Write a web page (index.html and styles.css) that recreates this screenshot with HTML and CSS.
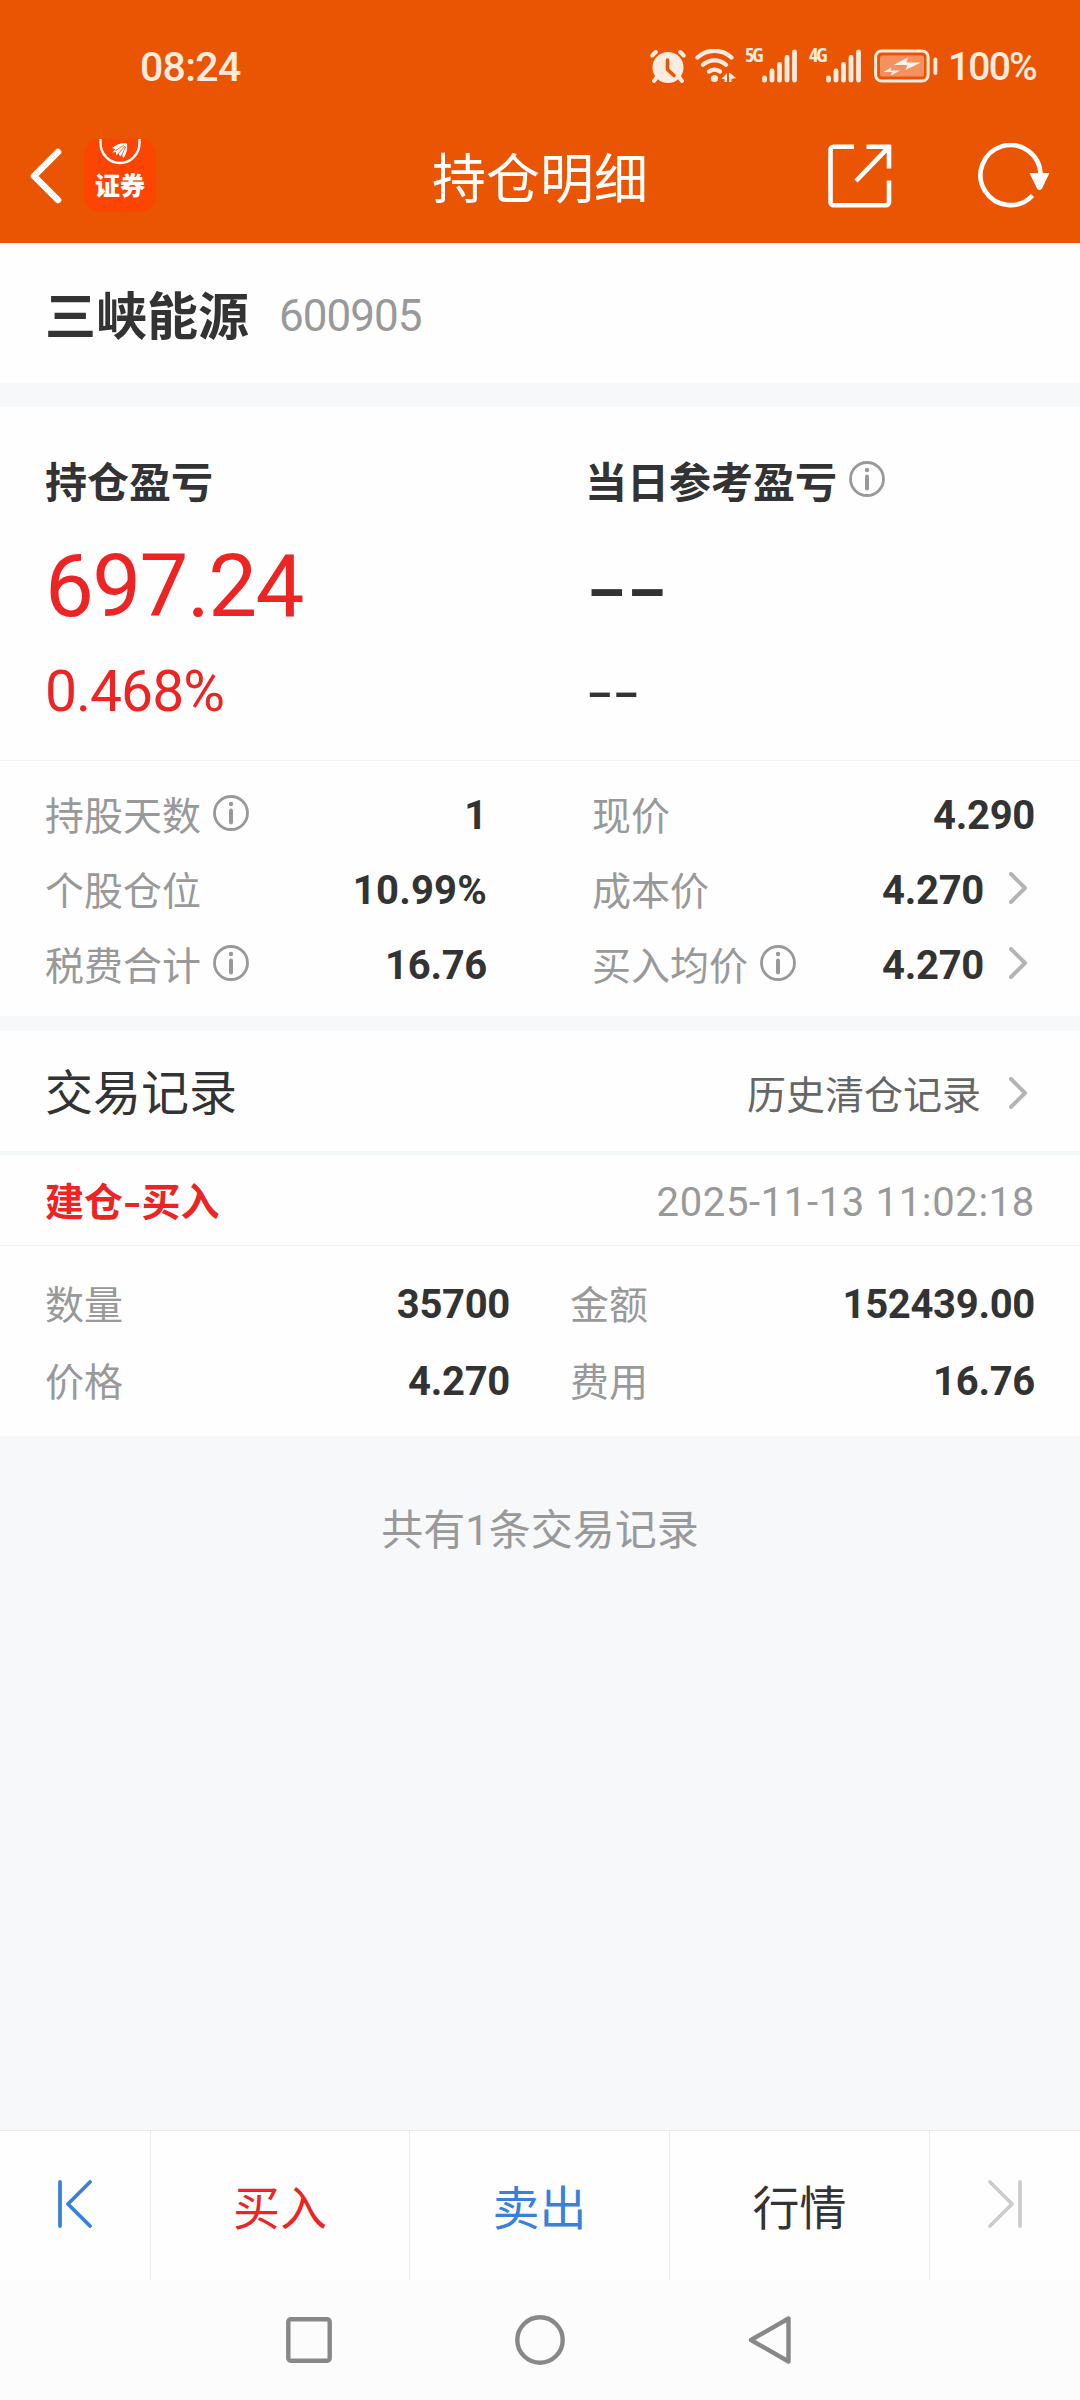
FILE: index.html
```html
<!DOCTYPE html>
<html lang="zh-CN">
<head>
    <meta charset="UTF-8">
    <meta name="viewport" content="width=device-width, initial-scale=1.0">
    <title>持仓明细</title>
    <link rel="stylesheet" href="styles.css">
</head>
<body>
    <!-- 图标 -->
    <svg width="0" height="0" class="symbols">
        <symbol id="info" viewBox="0 0 36 36">
            <circle cx="18" cy="18" r="16.500" fill="none" stroke="#999" stroke-width="2.800"/>
            <circle cx="18" cy="9" r="2.200" fill="#999"/>
            <path d="M18 15.500v12" stroke="#999" stroke-width="4" stroke-linecap="round"/>
        </symbol>
        <symbol id="arrow" viewBox="0 0 18 32">
            <path d="M2 2l14 14L2 30" fill="none" stroke="#b4b4b4" stroke-width="4" stroke-linecap="round" stroke-linejoin="round"/>
        </symbol>
        <symbol id="signal" viewBox="0 0 36 34">
            <path d="M2.500 29v2.200M10 22v9.200M17.500 15.500v15.700M25 8.500v22.700M32.500 3v28.200" fill="none" stroke="#fdebdf" stroke-width="4.800" stroke-linecap="round"/>
        </symbol>
    </svg>

    <div class="page">
        <header class="header">
            <div class="status-bar">
                <span class="time">08:24</span>
                <div class="status-icons">
                    <svg class="icon-alarm" width="36" height="34" viewBox="0 0 36 34">
                        <g fill="none" stroke="#fdebdf" stroke-width="4" stroke-linecap="round">
                            <path d="M2.300 6.500l3.500-3.500M33.700 6.500l-3.500-3.500M7 28l-3 4M29 28l3 4"/>
                        </g>
                        <circle cx="18" cy="18.500" r="15.500" fill="#fdebdf"/>
                        <path d="M17.500 11v9.500l6.500 6" fill="none" stroke="#ea5504" stroke-width="3.600" stroke-linecap="round"/>
                    </svg>
                    <svg class="icon-wifi" width="41" height="34" viewBox="0 0 41 34">
                        <g fill="none" stroke="#fdebdf" stroke-width="4.200" stroke-linecap="round">
                            <path d="M2.500 8.500a25 25 0 0 1 34 0M8 15.800a17 17 0 0 1 23 0M14 22.500a9.500 9.500 0 0 1 11 0"/>
                        </g>
                        <circle cx="19.500" cy="29.500" r="3.600" fill="#fdebdf"/>
                        <path d="M32 24v9h-2.500v-3h-3zM35 24l6 5-4.500 1v3H34v-9z" fill="#fdebdf"/>
                    </svg>
                    <span class="net">5G</span>
                    <svg class="icon-signal" width="36" height="34"><use href="#signal"/></svg>
                    <span class="net net-4g">4G</span>
                    <svg class="icon-signal" width="36" height="34"><use href="#signal"/></svg>
                    <svg class="icon-battery" width="64" height="34" viewBox="0 0 64 34">
                        <rect x="1.600" y="2" width="52.500" height="30" rx="6" fill="none" stroke="#fdebdf" stroke-width="3"/>
                        <rect x="6" y="6.500" width="44" height="21" rx="2.500" fill="#f4925f"/>
                        <rect x="59.500" y="8.500" width="3.800" height="17.500" rx="1.900" fill="#fdebdf"/>
                        <path d="M19.500 16L34 8.500l-1.500 5H47L31.500 21l2-5zM9.500 23l8-4.500-1 3H26l-9 5 1-3.500z" fill="#fff4ec"/>
                    </svg>
                    <span class="battery-num">100%</span>
                </div>
            </div>
            <div class="title-bar">
                <div class="title-left">
                    <svg width="32" height="56" viewBox="0 0 32 56">
                        <path d="M28 4L4 28l24 24" fill="none" stroke="#fff" stroke-width="6.500" stroke-linecap="round" stroke-linejoin="round"/>
                    </svg>
                    <div class="logo">
                        <svg width="42" height="28" viewBox="0 0 42 28">
                            <path d="M1.500 0v4a19.500 20 0 0 0 39 0V0" fill="none" stroke="#fff" stroke-width="2.400"/>
                            <path d="M13 9q7-6 15-4.500Q29 13 24.500 19q-1.500-2-1.500-3.500l-2 2-1.500-3-2.500 1.500v-3l-3.500.5q1-2 3-3z" fill="#fff"/>
                            <path d="M16 12l9-6M19 15l7-8M22.500 17l4-9" stroke="#fc4503" stroke-width="0.800"/>
                        </svg>
                        <span class="logo-text">证券</span>
                    </div>
                </div>
                <h1>持仓明细</h1>
                <div class="title-right">
                    <svg width="64" height="64" viewBox="0 0 64 64">
                        <g fill="none" stroke="#fff" stroke-width="4.600">
                            <path d="M26 2.800H5.500a3 3 0 0 0-3 3v52.500a3 3 0 0 0 3 3H58a3 3 0 0 0 3-3V36.500"/>
                            <path d="M38.500 2.800H61V24.500M61 2.800L28 37"/>
                        </g>
                    </svg>
                    <svg width="72" height="66" viewBox="0 0 72 66">
                        <path d="M62.500 31A30 30 0 1 0 54.500 52.500" fill="none" stroke="#fff" stroke-width="4.600"/>
                        <path d="M51.500 30h20l-7.500 15.500q-2.500 3.500-5 0z" fill="#fff"/>
                    </svg>
                </div>
            </div>
        </header>

        <section class="stock">
            <span class="stock-name">三峡能源</span>
            <span class="stock-code num">600905</span>
        </section>

        <section class="profit">
            <div class="profit-item">
                <div class="profit-label">持仓盈亏</div>
                <div class="profit-value num red">697.24</div>
                <div class="profit-rate num red">0.468%</div>
            </div>
            <div class="profit-item">
                <div class="profit-label">当日参考盈亏<svg class="info"><use href="#info"/></svg></div>
                <div class="profit-value empty">--</div>
                <div class="profit-rate empty">--</div>
            </div>
        </section>

        <section class="details">
            <div class="row">
                <span class="label">持股天数<svg class="info"><use href="#info"/></svg></span>
                <span class="value num">1</span>
            </div>
            <div class="row">
                <span class="label">现价</span>
                <span class="value num">4.290</span>
            </div>
            <div class="row">
                <span class="label">个股仓位</span>
                <span class="value num percent">10.99%</span>
            </div>
            <div class="row">
                <span class="label">成本价</span>
                <span class="value num">4.270</span>
                <svg class="arrow"><use href="#arrow"/></svg>
            </div>
            <div class="row">
                <span class="label">税费合计<svg class="info"><use href="#info"/></svg></span>
                <span class="value num">16.76</span>
            </div>
            <div class="row">
                <span class="label">买入均价<svg class="info"><use href="#info"/></svg></span>
                <span class="value num">4.270</span>
                <svg class="arrow"><use href="#arrow"/></svg>
            </div>
        </section>

        <section class="records">
            <div class="records-head">
                <h2>交易记录</h2>
                <span class="history">历史清仓记录</span>
                <svg class="arrow"><use href="#arrow"/></svg>
            </div>
            <div class="record-title">
                <span class="record-type red">建仓<span class="dash">-</span>买入</span>
                <span class="record-time num">2025-11-13 11:02:18</span>
            </div>
            <div class="record-body">
                <div class="row">
                    <span class="label">数量</span>
                    <span class="value num">35700</span>
                </div>
                <div class="row">
                    <span class="label">金额</span>
                    <span class="value num">152439.00</span>
                </div>
                <div class="row">
                    <span class="label">价格</span>
                    <span class="value num">4.270</span>
                </div>
                <div class="row">
                    <span class="label">费用</span>
                    <span class="value num">16.76</span>
                </div>
            </div>
        </section>

        <p class="total">共有<span class="num">1</span>条交易记录</p>

        <footer class="toolbar">
            <div class="tool">
                <svg width="34" height="48" viewBox="0 0 34 48">
                    <path d="M2 2v44M32 2L10 24l22 22" fill="none" stroke="#3880d8" stroke-width="3.800" stroke-linecap="round" stroke-linejoin="round"/>
                </svg>
            </div>
            <div class="tool red">买入</div>
            <div class="tool blue">卖出</div>
            <div class="tool">行情</div>
            <div class="tool">
                <svg width="34" height="48" viewBox="0 0 34 48">
                    <path d="M32 2v44M2 2l22 22L2 46" fill="none" stroke="#ccc" stroke-width="3.800" stroke-linecap="round" stroke-linejoin="round"/>
                </svg>
            </div>
        </footer>

        <nav class="nav-bar">
            <svg width="46" height="46" viewBox="0 0 46 46">
                <rect x="2.300" y="2.300" width="41.400" height="41.400" rx="2.500" fill="none" stroke="#888" stroke-width="4.400"/>
            </svg>
            <svg width="50" height="50" viewBox="0 0 50 50">
                <circle cx="25" cy="25" r="22.700" fill="none" stroke="#888" stroke-width="4.400"/>
            </svg>
            <svg width="44" height="50" viewBox="0 0 44 50">
                <path d="M40.500 3.500v43L3 25z" fill="none" stroke="#888" stroke-width="4.400" stroke-linejoin="round"/>
            </svg>
        </nav>
    </div>
</body>
</html>
```

FILE: styles.css
```css
/* 全局 */
* {
    box-sizing: border-box;
}
body {
    margin: 0;
    font-family: "Noto Sans CJK SC", sans-serif;
    color: #333;
    background-color: #f6f8fa;
}
.page {
    display: flex;
    flex-direction: column;
    width: 1080px;
    height: 2400px;
}
svg {
    display: block;
    flex-shrink: 0;
}
.symbols {
    position: absolute;
}
.num {
    font-family: Roboto, "Noto Sans CJK SC", sans-serif;
}
.red {
    color: #ec2424;
}
.blue {
    color: #3880d8;
}
.info {
    width: 36px;
    height: 36px;
    margin-left: 12px;
}
.arrow {
    width: 18px;
    height: 32px;
}

/* 顶部 */
.header {
    height: 243px;
    background-color: #ea5504;
    color: #fff;
}
.status-bar {
    display: flex;
    justify-content: space-between;
    align-items: center;
    height: 108px;
    padding: 24px 44px 0 140px;
    font-family: Roboto, sans-serif;
    color: #fdebdf;
}
.time {
    padding-top: 2px;
    font-size: 41px;
    font-weight: 500;
    letter-spacing: -0.700px;
}
.status-icons {
    display: flex;
    align-items: center;
}
.icon-wifi {
    margin-left: 9px;
}
.net {
    align-self: flex-start;
    width: 17px;
    margin: 3px 0 0 9px;
    font-family: "Open Sans", sans-serif;
    font-size: 20px;
    font-weight: bold;
    font-stretch: 75%;
    line-height: 20px;
    letter-spacing: -2px;
}
.net-4g {
    margin-left: 11px;
}
.icon-battery {
    margin-left: 12px;
}
.battery-num {
    padding-top: 2px;
    margin-left: 10px;
    font-size: 39px;
    font-weight: 500;
    letter-spacing: -1.800px;
}
.title-bar {
    display: grid;
    grid-template-columns: 1fr auto 1fr;
    align-items: center;
    height: 135px;
    padding: 0 30px;
}
.title-bar h1 {
    margin: 0;
    font-size: 54px;
    font-weight: normal;
    line-height: 80px;
}
.title-left {
    display: flex;
    align-items: center;
}
.title-right {
    display: flex;
    align-items: center;
    justify-content: flex-end;
    gap: 86px;
}
.logo {
    display: flex;
    flex-direction: column;
    align-items: center;
    width: 72px;
    height: 73px;
    margin-left: 22px;
    border-radius: 15px;
    background-color: #fc4503;
}
.logo-text {
    font-size: 25px;
    font-weight: 900;
    line-height: 34px;
}

/* 股票名称 */
.stock {
    display: flex;
    align-items: center;
    height: 140px;
    padding: 0 45px;
    background-color: #fefefe;
}
.stock-name {
    font-size: 51px;
    font-weight: bold;
}
.stock-code {
    margin: 6px 0 0 30px;
    font-size: 44px;
    letter-spacing: -1px;
    color: #999;
}

/* 盈亏 */
.profit {
    display: grid;
    grid-template-columns: 540px 1fr;
    height: 354px;
    margin-top: 24px;
    padding: 42px 0 0 45px;
    border-bottom: 1px solid #f3f5f5;
    background-color: #fefefe;
}
.profit-label {
    display: flex;
    align-items: center;
    height: 60px;
    font-size: 42px;
    font-weight: bold;
}
.profit-value {
    margin-top: 37px;
    font-size: 87px;
    line-height: 80px;
    letter-spacing: -1.600px;
}
.profit-rate {
    margin-top: 36px;
    font-size: 57px;
    line-height: 60px;
    letter-spacing: -1px;
}
.empty {
    width: fit-content;
    padding-left: 1px;
    font-family: "Noto Sans", sans-serif;
    letter-spacing: 0;
    transform: translateY(-4px) scaleX(1.45);
    transform-origin: left;
}

/* 持仓详情 */
.details {
    display: grid;
    grid-template-columns: 442px 443px;
    column-gap: 105px;
    grid-auto-rows: 75px;
    height: 255px;
    padding: 14px 45px 16px;
    background-color: #fefefe;
}
.row {
    display: flex;
    align-items: center;
}
.label {
    display: flex;
    align-items: center;
    flex: 1;
    font-size: 39px;
    color: #999;
}
.value {
    padding-top: 6px;
    font-size: 40px;
    font-weight: bold;
    letter-spacing: -0.300px;
}
.percent {
    letter-spacing: 0.200px;
}
.row .arrow {
    margin: 0 8px 0 25px;
}

/* 交易记录 */
.records {
    margin-top: 15px;
    background-color: #fefefe;
}
.records-head {
    display: flex;
    align-items: center;
    height: 124px;
    padding: 0 53px 0 45px;
    border-bottom: 4px solid #f4f7f7;
}
.records-head h2 {
    flex: 1;
    margin: -4px 0 0;
    font-size: 48px;
    font-weight: normal;
}
.history {
    margin: 2px 28px 0 0;
    font-size: 39px;
    color: #666;
}
.records-head .arrow {
    margin-top: 3px;
}
.record-title {
    display: flex;
    justify-content: space-between;
    align-items: center;
    height: 91px;
    padding: 0 45px;
    border-bottom: 1px solid #f3f5f5;
}
.record-type {
    margin-top: -2px;
    font-size: 39px;
    font-weight: bold;
}
.dash {
    display: inline-block;
    margin: 0 2px;
    transform: scaleX(1.3);
}
.record-time {
    padding-top: 4px;
    font-size: 40px;
    letter-spacing: 0.650px;
    color: #999;
}
.record-body {
    display: grid;
    grid-template-columns: 465px 465px;
    column-gap: 60px;
    grid-auto-rows: 77px;
    height: 190px;
    padding: 17px 45px 19px;
}
.total {
    flex: 1;
    margin: 61px 0 0;
    font-size: 42px;
    line-height: 60px;
    text-align: center;
    color: #999;
}

/* 底部按钮 */
.toolbar {
    display: grid;
    grid-template-columns: 151px 259px 260px 260px 150px;
    height: 150px;
    border-top: 1px solid #e6e8eb;
    background-color: #fefefe;
}
.tool {
    display: flex;
    align-items: center;
    justify-content: center;
    padding-bottom: 3px;
    border-right: 1px solid #ececec;
    font-size: 47px;
}
.tool:last-child {
    border-right: none;
}

/* 系统导航 */
.nav-bar {
    display: flex;
    align-items: center;
    justify-content: center;
    gap: 183px;
    height: 120px;
    padding-right: 2px;
    background-color: #fcfcfc;
}
```
